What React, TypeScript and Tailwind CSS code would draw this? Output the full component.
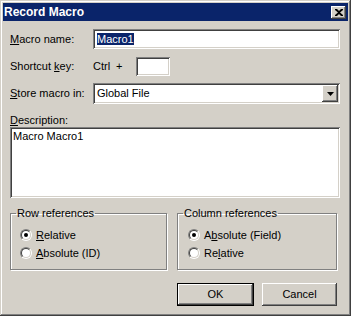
import React from "react";

const sunken =
  "bg-white shadow-[inset_1px_1px_#808080,inset_-1px_-1px_#ffffff,inset_2px_2px_#404040,inset_-2px_-2px_#d4d0c8]";
const raised =
  "bg-[#d4d0c8] shadow-[inset_-1px_-1px_#404040,inset_1px_1px_#ffffff,inset_-2px_-2px_#808080,inset_2px_2px_#d4d0c8]";

function Radio({ checked }: { checked?: boolean }) {
  return (
    <div className="w-[12px] h-[12px] rounded-full border border-t-[#808080] border-l-[#808080] border-b-white border-r-white flex">
      <div className="flex-1 rounded-full border border-t-[#404040] border-l-[#404040] border-b-[#d4d0c8] border-r-[#d4d0c8] bg-white flex items-center justify-center">
        {checked && <div className="w-[4px] h-[4px] rounded-full bg-black" />}
      </div>
    </div>
  );
}

function RadioRow({ checked, children }: { checked?: boolean; children: React.ReactNode }) {
  return (
    <div className="h-[18px] flex items-center gap-[4px]">
      <Radio checked={checked} />
      <span>{children}</span>
    </div>
  );
}

export default function App() {
  return (
    <div className="w-[351px] h-[316px] bg-[#d4d0c8] p-[3px] shadow-[inset_-1px_-1px_#404040,inset_1px_1px_#d4d0c8,inset_-2px_-2px_#808080,inset_2px_2px_#ffffff] font-['Liberation_Sans',Arial,sans-serif] text-[11px] leading-[13px] text-black flex flex-col">
      {/* Title bar */}
      <div className="h-[18px] bg-[#0a246a] flex items-center justify-between pl-[1px] pr-[2px]">
        <span className="text-white font-bold text-[12px] leading-[14px]">Record Macro</span>
        <div className={`${raised} w-[15px] h-[13px] flex items-center justify-center`}>
          <svg width="8" height="7" viewBox="0 0 8 7">
            <path d="M0 0h2l2 2 2-2h2v1L5 3.5 8 6v1H6L4 5 2 7H0V6l3-2.5L0 1z" fill="#000" />
          </svg>
        </div>
      </div>

      <div className="flex flex-col pl-[7px] pr-[8px]">
        {/* Macro name */}
        <div className="mt-[8px] flex items-center">
          <span className="w-[83px]">
            <u>M</u>acro name:
          </span>
          <div className={`${sunken} flex-1 h-[20px] flex items-center pl-[4px]`}>
            <span className="bg-[#0a246a] text-white px-[0px] leading-[12px]">Macro1</span>
          </div>
        </div>

        {/* Shortcut key */}
        <div className="mt-[8px] flex items-center">
          <span className="w-[83px]">
            Shortcut <u>k</u>ey:
          </span>
          <span>Ctrl</span>
          <span className="ml-[6px]">+</span>
          <div className={`${sunken} ml-[13px] w-[34px] h-[19px]`} />
        </div>

        {/* Store macro in */}
        <div className="mt-[7px] flex items-center">
          <span className="w-[83px]">
            <u>S</u>tore macro in:
          </span>
          <div className={`${sunken} flex-1 h-[21px] flex items-center justify-between pl-[4px] pr-[2px]`}>
            <span>Global File</span>
            <div className={`${raised} w-[16px] h-[17px] flex items-center justify-center`}>
              <svg width="7" height="4" viewBox="0 0 7 4">
                <path d="M0 0h7L3.5 4z" fill="#000" />
              </svg>
            </div>
          </div>
        </div>

        {/* Description */}
        <div className="mt-[10px]">
          <u>D</u>escription:
        </div>
        <div className={`${sunken} h-[71px] pt-[3px] pl-[3px]`}>Macro Macro1</div>

        {/* Group boxes */}
        <div className="mt-[9px] flex gap-[10px] pr-[3px]">
          <fieldset className="w-[157px] border border-[#808080] shadow-[inset_1px_1px_#ffffff,1px_1px_#ffffff] px-[5px] pt-[6px] pb-[7px]">
            <legend className="px-[1px] leading-[13px]">Row references</legend>
            <div className="pl-[4px]">
              <RadioRow checked>
                <u>R</u>elative
              </RadioRow>
              <RadioRow>
                <u>A</u>bsolute (ID)
              </RadioRow>
            </div>
          </fieldset>
          <fieldset className="flex-1 border border-[#808080] shadow-[inset_1px_1px_#ffffff,1px_1px_#ffffff] px-[5px] pt-[6px] pb-[7px]">
            <legend className="px-[1px] leading-[13px]">Column references</legend>
            <div className="pl-[5px]">
              <RadioRow checked>
                A<u>b</u>solute (Field)
              </RadioRow>
              <RadioRow>
                Re<u>l</u>ative
              </RadioRow>
            </div>
          </fieldset>
        </div>

        {/* Buttons */}
        <div className="mt-[13px] flex justify-end gap-[8px] pr-[3px]">
          <div className="w-[77px] h-[23px] border border-black flex">
            <div className={`${raised} flex-1 flex items-center justify-center`}>OK</div>
          </div>
          <div className={`${raised} w-[75px] h-[23px] flex items-center justify-center`}>Cancel</div>
        </div>
      </div>
    </div>
  );
}
